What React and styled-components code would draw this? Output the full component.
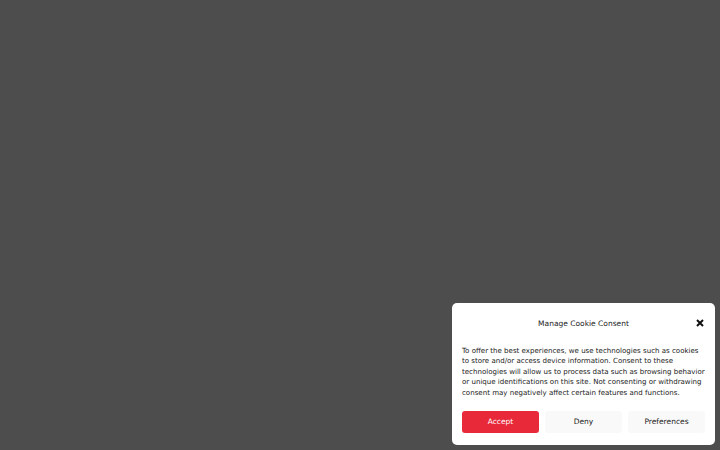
import React from "react";
import styled, { createGlobalStyle } from "styled-components";

const Global = createGlobalStyle`
  html, body { margin: 0; padding: 0; }
  body {
    background: #4d4d4d;
    font-family: "DejaVu Sans", sans-serif;
  }
`;

const Page = styled.div`
  width: 720px;
  height: 450px;
  display: flex;
  align-items: flex-end;
  justify-content: flex-end;
  padding: 0 5px 5px 0;
  box-sizing: border-box;
`;

const Card = styled.div`
  width: 263px;
  height: 142px;
  box-sizing: border-box;
  background: #ffffff;
  border-radius: 5px;
  padding: 10px 10px 0 10px;
  display: flex;
  flex-direction: column;
  color: #222222;
`;

const Header = styled.div`
  position: relative;
  display: flex;
  justify-content: center;
  align-items: center;
  height: 20px;
`;

const Title = styled.div`
  font-size: 7.5px;
  color: #222;
`;

const Close = styled.button`
  position: absolute;
  right: 0;
  top: 5px;
  width: 10px;
  height: 10px;
  padding: 0;
  border: 0;
  background: none;
  display: flex;
  align-items: center;
  justify-content: center;
  cursor: pointer;
`;

const Body = styled.p`
  margin: 12.5px 0 0 0;
  font-size: 7.05px;
  line-height: 10.5px;
  color: #222;
`;

const Buttons = styled.div`
  margin-top: 12.5px;
  display: grid;
  grid-template-columns: repeat(3, 1fr);
  gap: 6px;
`;

const Btn = styled.button`
  height: 22px;
  border: 0;
  border-radius: 3px;
  font-family: "DejaVu Sans", sans-serif;
  font-size: 7.5px;
  padding: 0;
  background: ${(p) => (p.$primary ? "#e8293a" : "#f9f9f9")};
  color: ${(p) => (p.$primary ? "#ffffff" : "#222222")};
  cursor: pointer;
`;

export default function App() {
  return (
    <>
      <Global />
      <Page>
        <Card>
          <Header>
            <Title>Manage Cookie Consent</Title>
            <Close aria-label="close">
              <svg width="8" height="8" viewBox="0 0 8 8">
                <path d="M1 1 L7 7 M7 1 L1 7" stroke="#111" strokeWidth="2" strokeLinecap="butt" />
              </svg>
            </Close>
          </Header>
          <Body>
            To offer the best experiences, we use technologies such as cookies to store and/or access device
            information. Consent to these technologies will allow us to process data such as browsing behavior or
            unique identifications on this site. Not consenting or withdrawing consent may negatively affect certain
            features and functions.
          </Body>
          <Buttons>
            <Btn $primary>Accept</Btn>
            <Btn>Deny</Btn>
            <Btn>Preferences</Btn>
          </Buttons>
        </Card>
      </Page>
    </>
  );
}
